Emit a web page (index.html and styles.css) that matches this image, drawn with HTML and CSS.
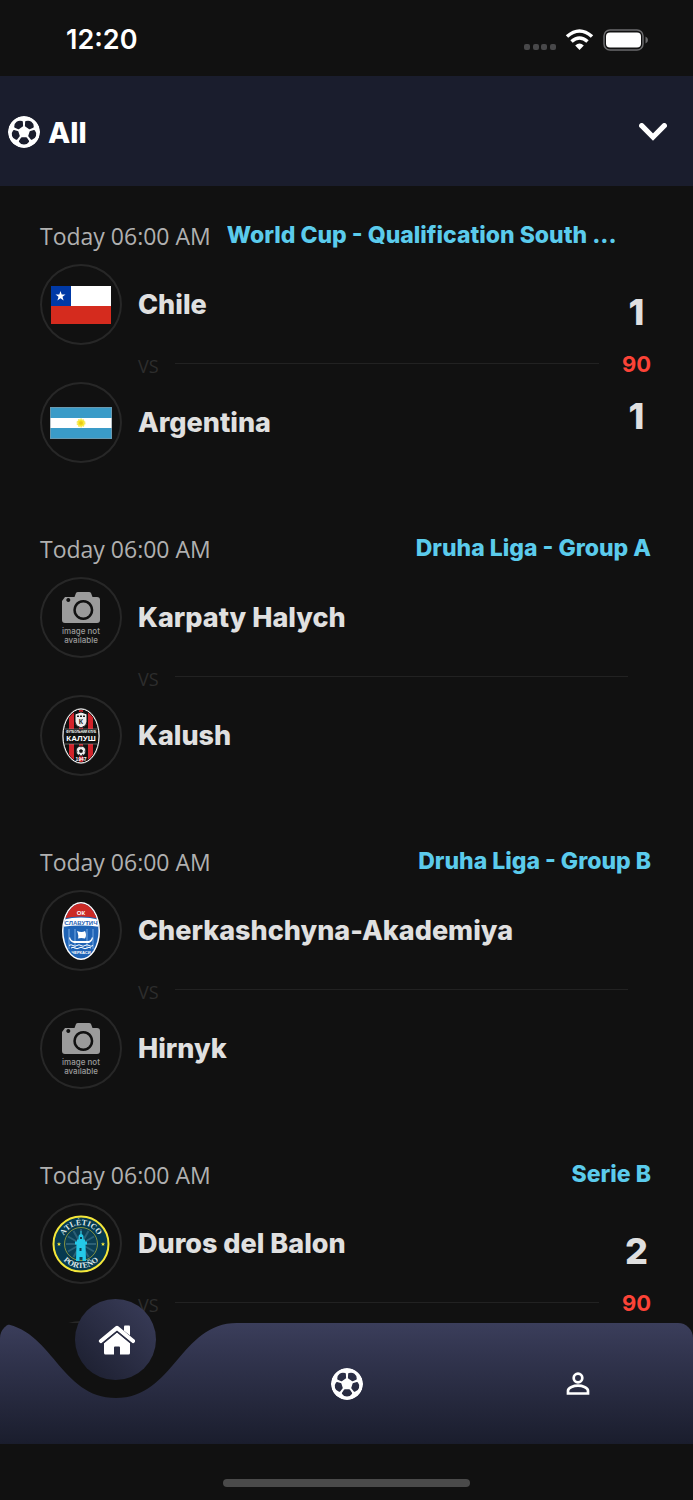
FILE: index.html
```
<!DOCTYPE html>
<html lang="en">
	<head>
		<meta charset="utf-8" />
		<meta name="viewport" content="width=device-width, initial-scale=1" />
		<title>Matches</title>
		<link rel="stylesheet" href="styles.css">
	</head>
	<body>
		<!-- shared icon -->
		<svg class="sprite" aria-hidden="true">
			<symbol id="ball" viewBox="-16 -16 32 32">
				<mask id="ball-mask">
					<circle r="16" fill="#fff" />
					<g fill="#000">
						<path id="patch" d="M-2.200 5.200h4.400q.5 0 .8.500l2 3.100q.3.600-.1 1.100Q3.200 12.600 0 12.600T-4.900 9.900q-.4-.5-.1-1.100l2-3.100q.3-.5.8-.5z" />
						<use href="#patch" transform="rotate(72)" />
						<use href="#patch" transform="rotate(144)" />
						<use href="#patch" transform="rotate(216)" />
						<use href="#patch" transform="rotate(288)" />
					</g>
				</mask>
				<circle r="16" fill="#fff" mask="url(#ball-mask)" />
			</symbol>
		</svg>

		<div class="status-bar">
			<span class="clock">12:20</span>
			<svg class="status-icons" width="124" height="22" viewBox="0 0 124 22">
				<g fill="#48484a">
					<rect x="0" y="15" width="6" height="6" rx="2" />
					<rect x="9" y="15" width="6" height="6" rx="2" />
					<rect x="17" y="15" width="6" height="6" rx="2" />
					<rect x="26" y="15" width="6" height="6" rx="2" />
				</g>
				<g fill="none" stroke="#fff" stroke-width="3.600">
					<path d="M43 7.500q12.500-11 25 0" />
					<path d="M47.500 12.500q8-7 16 0" />
				</g>
				<path fill="#fff" d="M51.200 16.400q4.300-3.600 8.600 0L55.500 21z" />
				<rect x="80" y="1" width="39" height="20" rx="6" fill="none" stroke="#6b6b6d" stroke-width="1.500" />
				<rect x="82" y="3.500" width="35" height="15" rx="4" fill="#fff" />
				<path fill="#6b6b6d" d="M121.500 7.500q2.500 1 2.500 3.500t-2.500 3.500z" />
			</svg>
		</div>

		<button class="filter" type="button">
			<svg class="ball"><use href="#ball" /></svg>
			<span>All</span>
			<svg class="chevron" width="28" height="18" viewBox="0 0 28 18">
				<path d="M2.700 2.700L14 14 25.300 2.700" fill="none" stroke="#fff" stroke-width="5.200" stroke-linecap="round" />
			</svg>
		</button>

		<main class="matches">
			<section class="match">
				<div class="match-head">
					<span class="date">Today 06:00 AM</span>
					<span class="league league-long">World Cup - Qualification South ...</span>
				</div>
				<div class="match-body">
					<div class="teams">
						<div class="team">
							<div class="logo">
								<svg width="60" height="38" viewBox="0 0 60 38">
									<rect width="60" height="20" fill="#fff" />
									<rect y="20" width="60" height="18" fill="#d52b1e" />
									<rect width="20" height="20" fill="#0039a6" />
									<path fill="#fff" d="M9.500 5l1.200 3.600h3.800l-3 2.200 1.100 3.600-3.100-2.200-3.100 2.200 1.100-3.600-3-2.200h3.800z" />
								</svg>
							</div>
							<span class="name">Chile</span>
						</div>
						<div class="versus"><span>VS</span></div>
						<div class="team">
							<div class="logo">
								<svg width="62" height="32" viewBox="0 0 62 32">
									<rect width="62" height="32" fill="#3a9bc8" />
									<rect y="11" width="62" height="10" fill="#fff" />
									<path d="M.5.500h61v31H.500z" fill="none" stroke="#8a9aa0" stroke-opacity=".6" />
									<circle cx="31" cy="16" r="3.500" fill="#f8e71c" stroke="#f6e95a" stroke-width="2" stroke-dasharray="1.500 .7" />
									<circle cx="31" cy="16" r="1.800" fill="#e8c81c" />
								</svg>
							</div>
							<span class="name">Argentina</span>
						</div>
					</div>
					<div class="score">
						<span>1</span>
						<span class="minute">90</span>
						<span>1</span>
					</div>
				</div>
			</section>

			<section class="match">
				<div class="match-head">
					<span class="date">Today 06:00 AM</span>
					<span class="league">Druha Liga - Group A</span>
				</div>
				<div class="match-body">
					<div class="teams">
						<div class="team">
							<div class="logo">
								<svg width="54" height="60" viewBox="0 0 54 60">
									<path fill="#9b9b9b" fill-rule="evenodd" d="M11 9h9.500L22 5q.5-1 2-1h11q1.500 0 2 1l1.500 4H43q3 0 3 3v20q0 3-3 3H11q-3 0-3-3V13zM29.300 12a10 10 0 1 0 .01 0zM14.300 10a2 2 0 1 0 .01 0z" />
									<circle cx="29.300" cy="22" r="7.500" fill="#9b9b9b" />
									<text x="27" y="46" class="no-image-text">image not</text>
									<text x="27" y="55" class="no-image-text">available</text>
								</svg>
							</div>
							<span class="name">Karpaty Halych</span>
						</div>
						<div class="versus"><span>VS</span></div>
						<div class="team">
							<div class="logo">
								<svg width="38" height="56" viewBox="0 0 38 56">
									<clipPath id="kalush"><ellipse cx="19" cy="28" rx="17" ry="26" /></clipPath>
									<ellipse cx="19" cy="28" rx="19" ry="28" fill="#555" />
									<ellipse cx="19" cy="28" rx="18" ry="27" fill="#111" stroke="#fff" />
									<g clip-path="url(#kalush)">
										<path fill="#d2232a" d="M7 0h5v56H7zM17 0h4v56h-4zM26 0h5v56h-5z" />
										<path fill="#111" d="M0 21h38v15H0z" />
										<path stroke="#aaa" stroke-width=".5" d="M0 21h38M0 36h38" />
									</g>
									<path fill="#eee" stroke="#111" d="M13 6l3-1 3-1 3 1 3 1v8q0 4-6 6-6-2-6-6z" />
									<path fill="#222" d="M15 7.500h2v1.500h-2zM18 7.500h2v1.500h-2zM21 7.500h2v1.500h-2z" />
									<text x="19" y="16" class="crest-text dark" font-size="7">К</text>
									<text x="19" y="25" class="crest-text" font-size="3">ФУТБОЛЬНИЙ КЛУБ</text>
									<text x="19" y="33" class="crest-text" font-size="8">КАЛУШ</text>
									<circle cx="19" cy="43" r="5" fill="#eee" stroke="#111" />
									<path fill="#111" d="M19 41l2 1.500-.7 2.300h-2.600l-.7-2.300zM18 38.500h2l-1 1zM14.500 42l1 1-.5 2zM23.500 42l-1 1 .5 2zM16.500 46.500l1.500-.5-.2 1.500zM21.500 46.500l-1.500-.5.2 1.500z" />
									<text x="19" y="53" class="crest-text" font-size="5">1947</text>
								</svg>
							</div>
							<span class="name">Kalush</span>
						</div>
					</div>
					<div class="score"></div>
				</div>
			</section>

			<section class="match">
				<div class="match-head">
					<span class="date">Today 06:00 AM</span>
					<span class="league">Druha Liga - Group B</span>
				</div>
				<div class="match-body">
					<div class="teams">
						<div class="team">
							<div class="logo">
								<svg width="38" height="58" viewBox="0 0 38 58">
									<clipPath id="slavutich"><ellipse cx="19" cy="29" rx="17.500" ry="27.500" /></clipPath>
									<ellipse cx="19" cy="29" rx="19" ry="29" fill="#fff" />
									<g clip-path="url(#slavutich)">
										<path fill="#1f63b5" d="M0 0h38v58H0z" />
										<path fill="#4a86cc" d="M6 27h2v20H6zM12 27h2v20h-2zM24 27h2v20h-2zM30 27h2v20h-2z" />
										<path fill="#cb2a26" d="M0 0h38v17Q19 12 0 17z" />
										<path fill="#fff" d="M0 18q19-5 38 0v7q-19-3-38 0z" />
									</g>
									<text x="19" y="13" class="crest-text" font-size="6">ОК</text>
									<text x="19" y="23" class="crest-text blue" font-size="6">СЛАВУТИЧ</text>
									<path fill="#fff" d="M15 29q5 2 8 0 2 4 0 7.500-4-1-7 0 1-3-1-7.500zM8 35q1 4 4 4h14q3 0 4-4l1 1q-1 4-4 5H12q-4-1-5-5z" />
									<path fill="none" stroke="#fff" d="M7 43.500q2-1.500 4 0t4 0 4 0 4 0 4 0 4 0M9 46q2-1.500 4 0t4 0 4 0 4 0 4 0" />
									<text x="19" y="52" class="crest-text" font-size="4">ЧЕРКАСИ</text>
								</svg>
							</div>
							<span class="name">Cherkashchyna-Akademiya</span>
						</div>
						<div class="versus"><span>VS</span></div>
						<div class="team">
							<div class="logo">
								<svg width="54" height="60" viewBox="0 0 54 60">
									<path fill="#9b9b9b" fill-rule="evenodd" d="M11 9h9.500L22 5q.5-1 2-1h11q1.500 0 2 1l1.500 4H43q3 0 3 3v20q0 3-3 3H11q-3 0-3-3V13zM29.300 12a10 10 0 1 0 .01 0zM14.300 10a2 2 0 1 0 .01 0z" />
									<circle cx="29.300" cy="22" r="7.500" fill="#9b9b9b" />
									<text x="27" y="46" class="no-image-text">image not</text>
									<text x="27" y="55" class="no-image-text">available</text>
								</svg>
							</div>
							<span class="name">Hirnyk</span>
						</div>
					</div>
					<div class="score"></div>
				</div>
			</section>

			<section class="match">
				<div class="match-head">
					<span class="date">Today 06:00 AM</span>
					<span class="league">Serie B</span>
				</div>
				<div class="match-body">
					<div class="teams">
						<div class="team">
							<div class="logo">
								<svg width="58" height="58" viewBox="-29 -29 58 58">
									<circle r="27.500" fill="#063a50" stroke="#f4e73a" stroke-width="2" />
									<circle r="16.500" fill="#0b3f55" stroke="#b9b83a" stroke-width=".7" />
									<path stroke="#2c6076" stroke-width="2" d="M-15 0h30M0-15v20M-13-7.500L13 7.500M-7.500-13L7.500 13M13-7.500L-13 7.500M7.500-13L-7.500 13" />
									<path id="arc-top" fill="none" d="M-19 0a19 19 0 0 1 38 0" />
									<path id="arc-bottom" fill="none" d="M-24 0a24 24 0 0 0 48 0" />
									<text class="arc-text"><textPath href="#arc-top" startOffset="50%">ATLÉTICO</textPath></text>
									<text class="arc-text"><textPath href="#arc-bottom" startOffset="50%">PORTEÑO</textPath></text>
									<path fill="#f4e73a" d="M-22-2l.6 1.400h1.500l-1.200 1 .4 1.600-1.300-.9-1.300.9.4-1.600-1.200-1h1.500zM22-2l.6 1.400h1.500l-1.200 1 .4 1.600-1.300-.9-1.300.9.4-1.600-1.200-1h1.500z" />
									<path fill="#24c8e8" d="M-.5-13h1v3q2 .5 2 2.500v3H4v2h2v3H4.500L5 17H1.500v-4h-3v4H-5l.5-16.500H-6v-3h2v-2h1.500v-3q0-2 2-2.500z" />
									<path fill="#0b3f55" d="M-1-7h2v2h-2zM-1.500 4h2v3h-2z" />
								</svg>
							</div>
							<span class="name">Duros del Balon</span>
						</div>
						<div class="versus"><span>VS</span></div>
						<div class="team">
							<div class="logo"></div>
						</div>
					</div>
					<div class="score">
						<span>2</span>
						<span class="minute">90</span>
						<span></span>
					</div>
				</div>
			</section>
		</main>

		<nav class="tabs">
			<svg class="tabs-bg" viewBox="0 0 693 121" preserveAspectRatio="none">
				<linearGradient id="tabs-fill" x1="0" y1="0" x2="0" y2="1">
					<stop offset="0" stop-color="#3b3e5b" />
					<stop offset=".25" stop-color="#32354f" />
					<stop offset="1" stop-color="#1a1d2d" />
				</linearGradient>
				<path fill="url(#tabs-fill)" d="M-5 0C52 0 58 75 116 75S180 0 237 0H693V121H-5z" />
			</svg>
			<a class="tab" href="#home" aria-label="Home">
				<span class="tab-active">
					<svg width="38" height="30" viewBox="-1 0 38 30">
						<path fill="#fff" d="M26 1.500q0-1 1-1h4q1 0 1 1v9l-6-4.800z" />
						<path fill="none" stroke="#fff" stroke-width="4.200" stroke-linecap="round" stroke-linejoin="round" d="M3 16L19 2.900 35 16" />
						<path fill="#fff" d="M19 7.500l13 10.700V28q0 1.500-1.500 1.500H22v-7q0-1-1-1h-4q-1 0-1 1v7H7.500Q6 29.500 6 28v-9.800z" />
						<path fill="none" stroke="#2b2e44" stroke-width="1.200" d="M4.500 18.500L19 6.600l14.500 11.900" />
					</svg>
				</span>
			</a>
			<a class="tab" href="#matches" aria-label="Matches">
				<svg class="ball"><use href="#ball" /></svg>
			</a>
			<a class="tab" href="#profile" aria-label="Profile">
				<svg width="24" height="24" viewBox="0 0 24 24" fill="none" stroke="#fff" stroke-width="2.700">
					<circle cx="12" cy="6" r="4.300" />
					<path d="M2 21.500v-2.800c0-3.500 6-5 10-5s10 1.500 10 5v2.800z" />
				</svg>
			</a>
		</nav>

		<div class="home-area"><div class="home-indicator"></div></div>
	</body>
</html>
```
FILE: styles.css
```
* {
	box-sizing: border-box;
}

body {
	display: flex;
	flex-direction: column;
	height: 100vh;
	margin: 0;
	overflow: hidden;
	background-color: #111;
	color: #e0e0e0;
	font-family: Inter, 'Open Sans', sans-serif;
}

svg {
	display: block;
}

.sprite {
	position: absolute;
	width: 0;
	height: 0;
}

.ball {
	width: 32px;
	height: 32px;
}

.status-bar {
	display: flex;
	flex: none;
	justify-content: space-between;
	align-items: center;
	height: 76px;
	padding: 3px 45px 0 66px;
}

.clock {
	color: #fff;
	font-size: 27px;
	font-weight: 600;
}

.filter {
	display: flex;
	flex: none;
	align-items: center;
	gap: 8px;
	height: 110px;
	padding: 2px 26px 0 8px;
	border: none;
	background-color: #1a1d2d;
	color: #fff;
	font-family: inherit;
	font-size: 29px;
	font-weight: 800;
	cursor: pointer;
}

.chevron {
	margin-left: auto;
}

.matches {
	flex: 1;
	min-height: 0;
	padding: 30px 42px 0 40px;
	overflow: hidden;
}

.match {
	padding-bottom: 66px;
}

.match-head {
	display: flex;
	gap: 16px;
	height: 48px;
	line-height: 40px;
}

.date {
	color: #b0b0b0;
	font-family: 'Open Sans', sans-serif;
	font-size: 23px;
	white-space: nowrap;
}

.league {
	flex: 1;
	min-width: 0;
	overflow: hidden;
	color: #5bcbec;
	font-size: 23px;
	font-weight: 800;
	line-height: 38px;
	text-align: right;
	text-overflow: ellipsis;
	white-space: nowrap;
}

.league-long {
	text-align: left;
}

.match-body {
	display: flex;
	gap: 23px;
}

.teams {
	flex: 1;
}

.team {
	display: flex;
	align-items: center;
	gap: 16px;
}

.logo {
	display: flex;
	flex: none;
	justify-content: center;
	align-items: center;
	width: 82px;
	height: 81px;
	border: 2px solid #272727;
	border-radius: 50%;
}

.name {
	font-size: 27px;
	font-weight: 800;
}

.versus {
	display: flex;
	align-items: center;
	gap: 16px;
	height: 37px;
	padding-left: 98px;
	color: #2d2d2d;
	font-family: 'Open Sans', sans-serif;
	font-size: 18px;
}

.versus span {
	padding-top: 4px;
}

.versus::after {
	content: '';
	flex: 1;
	height: 1px;
	background-color: #222;
}

.score {
	display: flex;
	flex-direction: column;
	justify-content: center;
	font-size: 36px;
	font-weight: 800;
	line-height: 52px;
	text-align: center;
}

.score span {
	height: 52px;
}

.score .minute {
	color: #fc4337;
	font-size: 22px;
	font-weight: 700;
}

.no-image-text {
	fill: #9b9b9b;
	font-size: 8px;
	font-weight: 500;
	text-anchor: middle;
}

.crest-text {
	fill: #fff;
	font-family: 'Liberation Sans', Arial, sans-serif;
	font-weight: 700;
	text-anchor: middle;
}

.crest-text.dark {
	fill: #222;
}

.crest-text.blue {
	fill: #1f63b5;
}

.arc-text {
	fill: #dfe8ea;
	font-family: 'Liberation Serif', serif;
	font-size: 8px;
	font-weight: 700;
	text-anchor: middle;
}

.tabs {
	position: relative;
	display: flex;
	flex: none;
	height: 121px;
}

.tabs-bg {
	position: absolute;
	width: 100%;
	height: 100%;
	border-radius: 15px 15px 0 0;
	overflow: hidden;
}

.tab {
	position: relative;
	display: flex;
	flex: 1;
	justify-content: center;
	align-items: center;
}

/* round button sits in the dip and sticks out above the bar */
.tab-active {
	position: absolute;
	top: -24px;
	display: flex;
	justify-content: center;
	align-items: center;
	width: 81px;
	height: 81px;
	border-radius: 50%;
	background: linear-gradient(45deg, #1a1d2d, #3b3e5b);
}

.home-area {
	display: flex;
	flex: none;
	justify-content: center;
	height: 56px;
	padding-top: 35px;
}

.home-indicator {
	width: 247px;
	height: 8px;
	border-radius: 4px;
	background-color: #4a4a4a;
}
```
